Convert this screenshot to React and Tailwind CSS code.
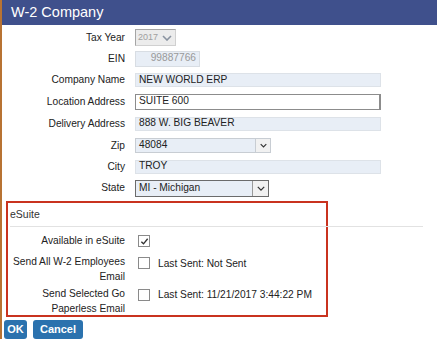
import React from 'react';

const Chevron = ({ className = '' }) => (
  <svg viewBox="0 0 10 6" className={className} fill="none" stroke="currentColor" strokeWidth="1.6">
    <path d="M1 1l4 4 4-4" />
  </svg>
);

const Row = ({ label, h, children }) => (
  <div className={`flex items-center ${h}`}>
    <div className="w-[123px] text-right">{label}</div>
    <div className="ml-[10px] flex">{children}</div>
  </div>
);

const Box = ({ className = '', children }) => (
  <div className={`flex items-center px-[3px] leading-none ${className}`}>{children}</div>
);

const Check = ({ checked }) => (
  <div className="w-[12px] h-[12px] border border-[#8a8a8a] bg-white flex items-center justify-center">
    {checked && (
      <svg viewBox="0 0 10 10" className="w-[9px] h-[9px]" fill="none" stroke="#333" strokeWidth="1.5">
        <path d="M1.5 5.2l2.4 2.4 4.6-5.6" />
      </svg>
    )}
  </div>
);

export default function App() {
  return (
    <div
      className="w-[437px] h-[339px] overflow-hidden bg-white border-l-2 border-[#b87333] text-[10.2px] text-[#222]"
      style={{ fontFamily: '"Liberation Sans", Arial, sans-serif' }}
    >
      {/* Title bar */}
      <div className="h-[25px] bg-[#3f508c] text-white text-[14.5px] pl-[9px] flex items-center">W-2 Company</div>

      {/* Company fields */}
      <div className="mt-[2px]">
        <Row label="Tax Year" h="h-[21px]">
          <div className="w-[41px] h-[17px] border border-[#a5a5a5] border-r-[#d0d0d0] border-b-[#d0d0d0] bg-[#ececec] flex items-center justify-between pl-[2px] pr-[3px] text-[#a0a0a0] text-[9px]">
            <span>2017</span>
            <Chevron className="w-[10px] h-[6px] text-[#8a93a0]" />
          </div>
        </Row>
        <Row label="EIN" h="h-[21px]">
          <Box className="w-[65px] h-[16px] bg-[#e8eef6] border border-[#d8dde3] justify-end text-[#999]">99887766</Box>
        </Row>
        <Row label="Company Name" h="h-[22px]">
          <Box className="w-[246px] h-[14px] bg-[#e8eef6] border border-[#dde2e8]">NEW WORLD ERP</Box>
        </Row>
        <Row label="Location Address" h="h-[21px]">
          <Box className="w-[246px] h-[16px] bg-white border border-[#8c8c8c] border-r-2">SUITE 600</Box>
        </Row>
        <Row label="Delivery Address" h="h-[23px]">
          <Box className="w-[246px] h-[14px] bg-[#e8eef6] border border-[#dde2e8]">888 W. BIG BEAVER</Box>
        </Row>
        <Row label="Zip" h="h-[21px]">
          <div className="w-[136px] h-[15px] bg-[#e8eef6] border border-[#c8cdd3] flex">
            <Box className="flex-1">48084</Box>
            <div className="w-[15px] bg-[#f1f1f1] border-l border-[#c8cdd3] flex items-center justify-center">
              <Chevron className="w-[7px] h-[5px] text-[#333]" />
            </div>
          </div>
        </Row>
        <Row label="City" h="h-[21px]">
          <Box className="w-[246px] h-[14px] bg-[#e8eef6] border border-[#dde2e8]">TROY</Box>
        </Row>
        <Row label="State" h="h-[22px]">
          <div className="w-[134px] h-[17px] bg-[#e8eef6] border border-[#6b6b6b] flex">
            <Box className="flex-1">MI - Michigan</Box>
            <div className="w-[16px] bg-[#f1f1f1] border-l border-[#9a9a9a] flex items-center justify-center">
              <Chevron className="w-[8px] h-[5px] text-[#333]" />
            </div>
          </div>
        </Row>
      </div>

      {/* eSuite */}
      <div className="mt-[2px] ml-[4px] w-[322px] h-[116px] border-2 border-[#c9331f]">
        <div className="h-[23px] flex items-center pl-[2px] text-[10.5px] text-[#333]">eSuite</div>
        <div className="ml-[2px] w-[413px] h-px bg-[#e2e2e2]" />

        <div className="mt-[6px] h-[16px] flex items-center">
          <div className="w-[117px] text-right">Available in eSuite</div>
          <div className="ml-[13px]"><Check checked /></div>
        </div>

        <div className="mt-[5px] flex items-start">
          <div className="w-[117px] text-right leading-[15px]">Send All W-2 Employees<br />Email</div>
          <div className="ml-[13px] mt-[3px]"><Check /></div>
          <div className="ml-[8px] mt-[2px] leading-[15px]">Last Sent: Not Sent</div>
        </div>

        <div className="mt-[2px] flex items-start">
          <div className="w-[117px] text-right leading-[15px]">Send Selected Go<br />Paperless Email</div>
          <div className="ml-[13px] mt-[3px]"><Check /></div>
          <div className="ml-[8px] mt-[1px] leading-[15px]">Last Sent: 11/21/2017 3:44:22 PM</div>
        </div>
      </div>

      {/* Buttons */}
      <div className="mt-[3px] ml-[2px] flex gap-[6px]">
        <button className="w-[23px] h-[19px] bg-[#2b72ae] rounded-[3px] text-white font-bold text-[11px] leading-none">OK</button>
        <button className="w-[50px] h-[19px] bg-[#2b72ae] rounded-[3px] text-white font-bold text-[11px] leading-none">Cancel</button>
      </div>
    </div>
  );
}
